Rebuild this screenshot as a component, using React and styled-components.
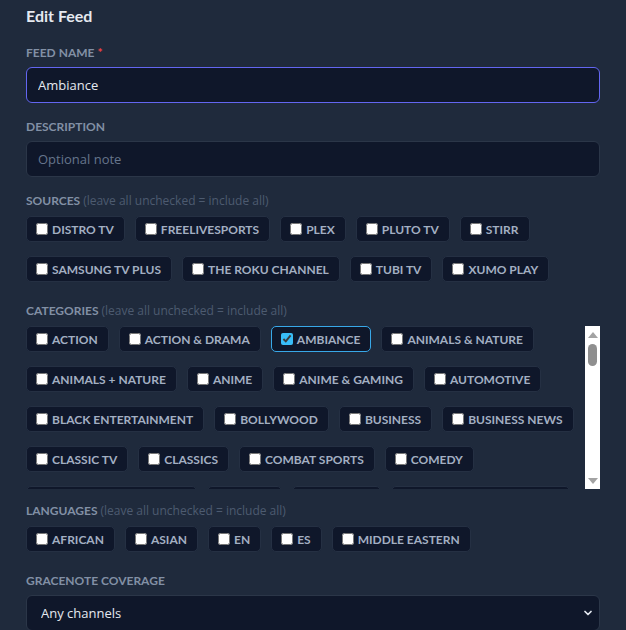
import React, { useState } from "react";
import styled, { createGlobalStyle } from "styled-components";
import { ChevronDown } from "lucide-react";

const SOURCES = [
  "DISTRO TV",
  "FREELIVESPORTS",
  "PLEX",
  "PLUTO TV",
  "STIRR",
  "SAMSUNG TV PLUS",
  "THE ROKU CHANNEL",
  "TUBI TV",
  "XUMO PLAY",
];

const CATEGORIES = (
  "ACTION|ACTION & DRAMA|AMBIANCE|ANIMALS & NATURE|ANIMALS + NATURE|ANIME|ANIME & GAMING|AUTOMOTIVE|" +
  "BLACK ENTERTAINMENT|BOLLYWOOD|BUSINESS|BUSINESS NEWS|CLASSIC TV|CLASSICS|COMBAT SPORTS|COMEDY|" +
  "COMPETITION REALITY|CRIME|CULTURE|DAYTIME + TALK SHOWS|DOCUMENTARIES|DRAMA|ENTERTAINMENT|" +
  "ESPAÑOL|FAMILY|FASHION|FOOD|FOOD & HOME|GAME SHOWS|GAMING|GLOBAL NEWS|HISTORY|HOLIDAY|HOME|" +
  "HORROR|INTERNATIONAL|KIDS|LATINO|LIFESTYLE|LOCAL NEWS|MOVIES|MUSIC|MYSTERY|NEWS|NEWS + OPINION|" +
  "OUTDOORS|PETS|REALITY|ROMANCE|SCI-FI|SCIENCE & TECH|SPORTS|SPORTS NEWS|TALK SHOWS|TEENS|" +
  "THRILLER|TRAVEL|TRUE CRIME|WEATHER|WESTERNS|WILDLIFE|WORLD MUSIC"
).split("|");

const LANGUAGES = ["AFRICAN", "ASIAN", "EN", "ES", "MIDDLE EASTERN"];

const GlobalStyle = createGlobalStyle`
  html, body {
    margin: 0;
    overflow: hidden;
    background: #1f2a3c;
  }
  body {
    font-family: Lato, "Open Sans", sans-serif;
    color: #e2e8f0;
  }
`;

const Panel = styled.div`
  width: 574px;
  padding: 4px 26px 0;
`;

const Title = styled.h2`
  margin: 0 0 18px;
  font-size: 16px;
  line-height: 24px;
  font-weight: 700;
  color: #e5e9f0;
`;

const Field = styled.div`
  margin-bottom: ${({ $after }) => $after || 17}px;
`;

const Label = styled.div`
  margin-bottom: ${({ $gap }) => $gap || 7}px;
  font-size: 12px;
  line-height: 14px;
  font-weight: 700;
  color: #8290a5;
  text-transform: uppercase;
`;

const Required = styled.span`
  color: #ef4444;
`;

const Hint = styled.span`
  font-family: "Open Sans", sans-serif;
  font-weight: 400;
  text-transform: none;
  color: #4d5b70;
`;

const TextInput = styled.input`
  box-sizing: border-box;
  display: block;
  width: 100%;
  height: 36px;
  padding: 0 11px;
  border: 1px solid ${({ $focus }) => ($focus ? "#6366f1" : "#2b3648")};
  border-radius: 6px;
  background: #0f172a;
  font-family: "Open Sans", sans-serif;
  font-size: 13px;
  color: #e5e9f0;
  caret-color: #e5e9f0;
  outline: none;

  &::placeholder {
    color: #66758c;
  }
`;

const ChipWrap = styled.div`
  display: flex;
  flex-wrap: wrap;
  gap: 14px 10px;
`;

const ScrollBox = styled.div`
  display: flex;
  height: 163px;
`;

const ScrollArea = styled.div`
  flex: 1;
  overflow: hidden;
`;

const Rail = styled.div`
  display: flex;
  flex-direction: column;
  align-items: center;
  width: 15px;
  background: #fff;
`;

const RailButton = styled.div`
  display: flex;
  align-items: center;
  justify-content: center;
  height: 17px;
  width: 100%;
`;

const Triangle = styled.div`
  width: 0;
  height: 0;
  border-left: 5px solid transparent;
  border-right: 5px solid transparent;
  ${({ $down }) =>
    $down ? "border-top: 6px solid #a3a3a3;" : "border-bottom: 6px solid #a3a3a3;"}
`;

const Track = styled.div`
  flex: 1;
  width: 100%;
  display: flex;
  justify-content: center;
`;

const Thumb = styled.div`
  margin-top: 1px;
  width: 9px;
  height: 22px;
  border-radius: 5px;
  background: #8f8f8f;
`;

const Chip = styled.label`
  box-sizing: border-box;
  display: inline-flex;
  align-items: center;
  height: 26px;
  padding: 0 10px 0 9px;
  border: 1px solid ${({ $on }) => ($on ? "#38a8e8" : "#253043")};
  border-radius: 5px;
  background: #0f172a;
  font-size: 12px;
  font-weight: 700;
  color: #a3afc2;
  white-space: nowrap;
  cursor: pointer;
`;

const Check = styled.input`
  margin: 0 4px 1px 0;
  width: 12px;
  height: 12px;
  accent-color: #38bdf8;
`;

const SelectBox = styled.div`
  position: relative;
`;

const Select = styled.select`
  box-sizing: border-box;
  display: block;
  width: 100%;
  height: 36px;
  padding: 0 14px;
  appearance: none;
  border: 1px solid #2b3648;
  border-radius: 6px;
  background: #0f172a;
  font-family: "Open Sans", sans-serif;
  font-size: 13px;
  color: #e5e9f0;
  outline: none;
`;

const Arrow = styled(ChevronDown)`
  position: absolute;
  right: 6px;
  top: 12px;
  color: #e5e9f0;
  pointer-events: none;
`;

const ChipGroup = ({ items, selected, onToggle }) => (
  <ChipWrap>
    {items.map((item) => {
      const on = selected.includes(item);
      return (
        <Chip key={item} $on={on}>
          <Check type="checkbox" checked={on} onChange={() => onToggle(item)} />
          {item}
        </Chip>
      );
    })}
  </ChipWrap>
);

const App = () => {
  const [name, setName] = useState("Ambiance");
  const [picked, setPicked] = useState(["AMBIANCE"]);

  const toggle = (item) =>
    setPicked((list) =>
      list.includes(item) ? list.filter((x) => x !== item) : [...list, item]
    );

  return (
    <Panel>
      <GlobalStyle />
      <Title>Edit Feed</Title>
      <Field>
        <Label>
          Feed name <Required>*</Required>
        </Label>
        <TextInput $focus autoFocus value={name} onChange={(e) => setName(e.target.value)} />
      </Field>
      <Field>
        <Label>Description</Label>
        <TextInput placeholder="Optional note" />
      </Field>
      <Field $after={22}>
        <Label $gap={8}>
          Sources <Hint>(leave all unchecked = include all)</Hint>
        </Label>
        <ChipGroup items={SOURCES} selected={picked} onToggle={toggle} />
      </Field>
      <Field $after={15}>
        <Label $gap={8}>
          Categories <Hint>(leave all unchecked = include all)</Hint>
        </Label>
        <ScrollBox>
          <ScrollArea>
            <ChipGroup items={CATEGORIES} selected={picked} onToggle={toggle} />
          </ScrollArea>
          <Rail>
            <RailButton>
              <Triangle />
            </RailButton>
            <Track>
              <Thumb />
            </Track>
            <RailButton>
              <Triangle $down />
            </RailButton>
          </Rail>
        </ScrollBox>
      </Field>
      <Field $after={22}>
        <Label $gap={8}>
          Languages <Hint>(leave all unchecked = include all)</Hint>
        </Label>
        <ChipGroup items={LANGUAGES} selected={picked} onToggle={toggle} />
      </Field>
      <Field>
        <Label>Gracenote coverage</Label>
        <SelectBox>
          <Select defaultValue="any">
            <option value="any">Any channels</option>
            <option value="with">Only channels with Gracenote</option>
            <option value="without">Only channels without Gracenote</option>
          </Select>
          <Arrow size={12} strokeWidth={3.5} />
        </SelectBox>
      </Field>
    </Panel>
  );
};

export default App;
